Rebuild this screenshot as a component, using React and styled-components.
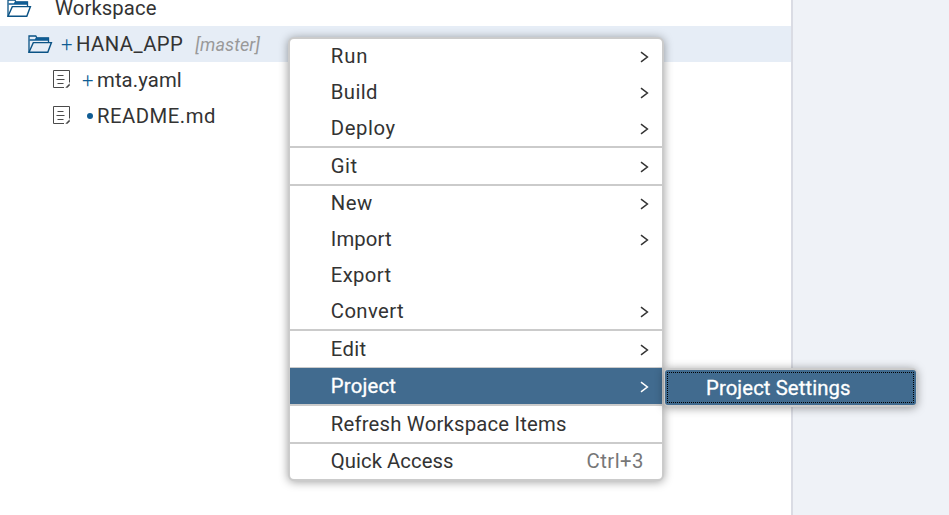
import React from 'react';
import styled, { createGlobalStyle, css } from 'styled-components';

const GlobalStyle = createGlobalStyle`
  * { box-sizing: border-box; }
  body { margin: 0; background: #fff; }
`;

const Page = styled.div`
  position: relative;
  display: flex;
  width: 949px;
  height: 515px;
  overflow: hidden;
  font: 20.3px/36px Roboto, sans-serif;
  color: #333;
  white-space: nowrap;
`;

const Tree = styled.div`
  width: 791px;
  height: 100%;
`;

const SidePanel = styled.div`
  flex: 1;
  border-left: 2px solid #dadce4;
  background: #eff2f7;
`;

const TreeRow = styled.div`
  display: flex;
  align-items: center;
  height: 36px;
  padding-left: ${(p) => p.$indent}px;
  background: ${(p) => (p.$selected ? '#e6edf6' : 'transparent')};

  &:first-child {
    margin-top: -10px;
  }
`;

const IconBox = styled.span`
  display: flex;
  flex: none;
  width: ${(p) => p.$width}px;
`;

const Marker = styled.span`
  display: flex;
  align-items: center;
  flex: none;
  width: 15px;
  height: 36px;
  font-weight: 300;
  color: #0f5c94;
`;

const Dot = styled.span`
  width: 6px;
  height: 6px;
  margin: 0 0 0 5px;
  border-radius: 50%;
  background: #0f5c94;
`;

const Label = styled.span`
  letter-spacing: ${(p) => p.$spacing || 0}px;
`;

const Branch = styled.span`
  margin: 1px 0 0 12px;
  font-size: 18px;
  font-style: italic;
  letter-spacing: 0.1px;
  color: #999;
`;

const floating = css`
  position: absolute;
  background: #fff;
  box-shadow: 0 1px 10px rgba(0, 0, 0, 0.38);
`;

const Menu = styled.div`
  ${floating}
  left: 288px;
  top: 37px;
  width: 376px;
  height: 444px;
  border: 2px solid #cbcbcb;
  border-radius: 6px;
`;

const Group = styled.div`
  display: flex;
  flex-direction: column;
  justify-content: flex-end;
  height: ${(p) => p.$height}px;
`;

const Separator = styled.div`
  height: ${(p) => p.$height}px;
  background: #cbcbcb;
`;

const MenuItem = styled.div`
  display: flex;
  flex: none;
  align-items: center;
  justify-content: space-between;
  height: 36px;
  padding: 0 13px 0 40.8px;
  ${(p) => p.$active && css`
    background: #416b8f;
    color: #fff;
    -webkit-text-stroke: 0.3px #fff;
  `}
`;

const Shortcut = styled.span`
  margin-right: 5px;
  letter-spacing: 0.5px;
  color: #777;
`;

const Submenu = styled.div`
  ${floating}
  left: 664px;
  top: 368px;
  width: 253px;
  height: 39px;
  border: solid #cbcbcb;
  border-width: 2px 1px;
  border-radius: 5px;
  background: #cbcbcb;
`;

const SubmenuItem = styled.div`
  height: 35px;
  padding: 0 0 0 41px;
  border-radius: 3px;
  background: #416b8f;
  color: #fff;
  -webkit-text-stroke: 0.3px #fff;
  outline: 1px dotted #000;
  outline-offset: -3px;
`;

const FolderIcon = () => (
  <svg width="25" height="20" viewBox="0 -1 25 20" fill="none">
    <path d="M1 17.3V1h6.8l1 1.8h11.7v4.5" stroke="#0b5385" strokeWidth="1.3" />
    <path d="M1.5 4.3h5.3l1-1.5h12.7v3H1.5z" fill="#0f5c94" />
    <path d="M5.3 7.6h18.1l-3.6 9.7H1z" stroke="#0b5385" strokeWidth="1.4" />
  </svg>
);

const FileIcon = () => (
  <svg width="18" height="20" viewBox="0 0 18 20" fill="none" stroke="#4a4a4a">
    <path d="M11 17.5H.5V.5h16v12" />
    <path d="M12.3 17.7l4.4-4.4v2.2l-2.2 2.2z" fill="#4a4a4a" stroke="none" />
    <path d="M4.5 5.5h6M3.5 9.5h8M4.5 13.5h6" strokeWidth="1.2" />
  </svg>
);

const Chevron = () => (
  <svg width="9" height="13" viewBox="0 0 9 13" fill="none" stroke="currentColor" strokeWidth="1.5">
    <path d="M1 2.2l6.4 4.8L1 11.8" />
  </svg>
);

const menuGroups = [
  { height: 107, items: [['Run', 0.9], ['Build', 0.4], ['Deploy', 0.6]], separator: 2 },
  { height: 36, items: [['Git', 0.5]], separator: 2 },
  { height: 143, items: [['New', 0.5], ['Import', 0.1], ['Export', 0.35, 'none'], ['Convert', 0.4]], separator: 2 },
  { height: 36, items: [['Edit', 0.3]], separator: 1 },
  { height: 36, items: [['Project', 0.2, 'active']], separator: 2 },
  { height: 36, items: [['Refresh Workspace Items', 0.2, 'none']], separator: 2 },
  { height: 35, items: [['Quick Access', 0.05, 'shortcut']], separator: 0 },
];

export default function App() {
  return (
    <>
      <GlobalStyle />
      <Page>
        <Tree>
          <TreeRow $indent={7}>
            <IconBox $width={48}><FolderIcon /></IconBox>
            <Label $spacing={0.1}>Workspace</Label>
          </TreeRow>
          <TreeRow $indent={28} $selected>
            <IconBox $width={33}><FolderIcon /></IconBox>
            <Marker>+</Marker>
            <Label $spacing={0.45}>HANA_APP</Label>
            <Branch>[master]</Branch>
          </TreeRow>
          <TreeRow $indent={53}>
            <IconBox $width={29}><FileIcon /></IconBox>
            <Marker>+</Marker>
            <Label $spacing={0.1}>mta.yaml</Label>
          </TreeRow>
          <TreeRow $indent={53}>
            <IconBox $width={29}><FileIcon /></IconBox>
            <Marker><Dot /></Marker>
            <Label $spacing={0.5}>README.md</Label>
          </TreeRow>
        </Tree>
        <SidePanel />
        <Menu>
          {menuGroups.map(({ height, items, separator }) => (
            <React.Fragment key={items[0][0]}>
              <Group $height={height}>
                {items.map(([text, spacing, kind]) => (
                  <MenuItem key={text} $active={kind === 'active'}>
                    <Label $spacing={spacing}>{text}</Label>
                    {kind === 'shortcut' && <Shortcut>Ctrl+3</Shortcut>}
                    {(!kind || kind === 'active') && <Chevron />}
                  </MenuItem>
                ))}
              </Group>
              {separator > 0 && <Separator $height={separator} />}
            </React.Fragment>
          ))}
        </Menu>
        <Submenu>
          <SubmenuItem><Label $spacing={0.1}>Project Settings</Label></SubmenuItem>
        </Submenu>
      </Page>
    </>
  );
}
